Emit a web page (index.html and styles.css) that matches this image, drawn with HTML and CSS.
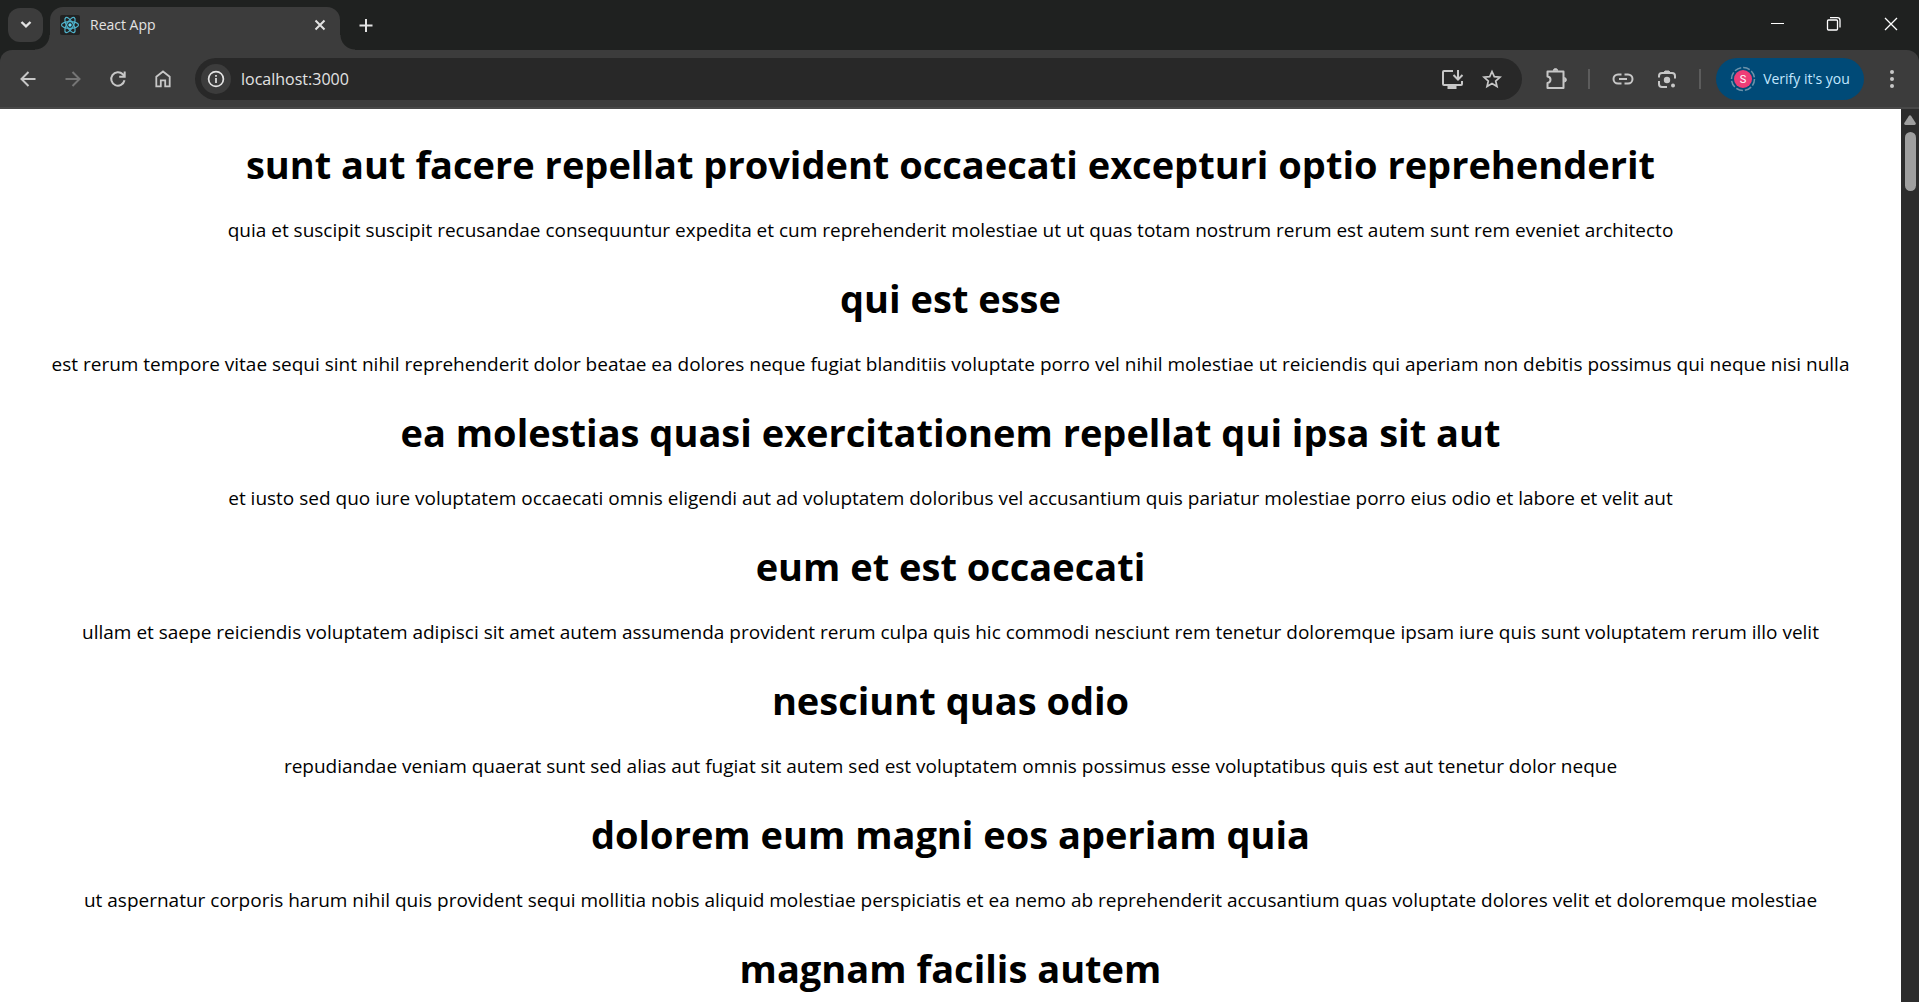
FILE: index.html
```html
<!DOCTYPE html>
<html lang="en">
<head>
<meta charset="utf-8">
<title>React App</title>
<link rel="stylesheet" href="styles.css">
</head>
<body>
<header class="browser">
  <div class="tabstrip">
    <button class="tab-search" aria-label="Search tabs">
      <svg width="20" height="20" viewBox="0 0 20 20" fill="none" stroke="currentColor" stroke-width="2.400"><path d="M5.500 7 10 11.300 14.500 7"/></svg>
    </button>
    <div class="tab">
      <svg class="favicon" width="20" height="20" viewBox="0 0 20 20" fill="none" stroke="#4fb3cc" stroke-width="1.200"><rect width="20" height="20" rx="2" fill="#222" stroke="none"/><ellipse cx="10" cy="10" rx="8.500" ry="3.300"/><ellipse cx="10" cy="10" rx="8.500" ry="3.300" transform="rotate(60 10 10)"/><ellipse cx="10" cy="10" rx="8.500" ry="3.300" transform="rotate(120 10 10)"/><circle cx="10" cy="10" r="1.700" fill="#61dafb" stroke="none"/></svg>
      <span class="tab-title">React App</span>
      <button class="tab-close" aria-label="Close tab">
        <svg width="20" height="20" viewBox="0 0 20 20" fill="none" stroke="currentColor" stroke-width="2"><path d="m5.500 5.500 9 9m0-9-9 9"/></svg>
      </button>
    </div>
    <button class="new-tab" aria-label="New tab">
      <svg width="20" height="20" viewBox="0 0 20 20" fill="none" stroke="currentColor" stroke-width="2"><path d="M10 4v13M3.500 10.500h13"/></svg>
    </button>
    <div class="window-controls">
      <button aria-label="Minimize"><svg width="16" height="16" viewBox="0 0 16 16" stroke="currentColor"><path d="M2 7.500h13"/></svg></button>
      <button aria-label="Restore"><svg width="16" height="16" viewBox="0 0 16 16" fill="none" stroke="currentColor" stroke-width="1.300"><rect x="1.500" y="4" width="10" height="10" rx="1"/><path d="M4 1.700h7.500a2.500 2.500 0 0 1 2.500 2.500V11.500"/></svg></button>
      <button aria-label="Close window"><svg width="16" height="16" viewBox="0 0 16 16" stroke="currentColor" stroke-width="1.300"><path d="m2 2 12 12M14 2 2 14"/></svg></button>
    </div>
  </div>
  <div class="toolbar">
    <nav class="nav-buttons" aria-label="History">
      <button aria-label="Back"><svg width="20" height="20" viewBox="0 0 20 20" fill="none" stroke="currentColor" stroke-width="2"><path d="M17.500 10H3.500M10.500 3 3.500 10l7 7"/></svg></button>
      <button class="off" aria-label="Forward" disabled><svg width="20" height="20" viewBox="0 0 20 20" fill="none" stroke="currentColor" stroke-width="2"><path d="M2.500 10h14M9.500 3l7 7-7 7"/></svg></button>
      <button aria-label="Reload"><svg width="20" height="20" viewBox="0 0 20 20" fill="none" stroke="currentColor" stroke-width="2"><path d="M16.500 11.300A6.700 6.700 0 1 1 14.800 5.300L16 6.500M16.700 2.500v5.200h-5.500"/></svg></button>
      <button aria-label="Home"><svg width="20" height="20" viewBox="0 0 20 20" fill="none" stroke="currentColor" stroke-width="1.800"><path d="M3.300 7.800 10 2.500l6.700 5.300v9.600h-4.500v-6H7.800v6H3.300z"/></svg></button>
    </nav>
    <div class="omnibox">
      <button class="site-info" aria-label="Site information"><svg width="20" height="20" viewBox="0 0 20 20" fill="none" stroke="currentColor" stroke-width="1.700"><circle cx="10" cy="10" r="7.400"/><path d="M10 9v5M10 6v1.800"/></svg></button>
      <input class="url" type="text" value="localhost:3000" aria-label="Address">
      <button aria-label="Install app"><svg width="24" height="24" viewBox="0 0 24 24" fill="none" stroke="currentColor" stroke-width="2"><path d="M13 4H4q-1 0-1 1v12q0 1 1 1h17q1 0 1-1v-3M18 3v9M13.500 8l4.500 4.500L22.500 8"/><path d="M8.500 19v2h7v-2" fill="currentColor"/></svg></button>
      <button aria-label="Bookmark this tab"><svg width="20" height="20" viewBox="0 0 20 20" fill="none" stroke="currentColor" stroke-width="1.700"><path d="m10 2.500 2.300 5.200 5.700.5-4.300 3.800 1.300 5.600-5-3-5 3 1.300-5.600L2 8.200l5.700-.5z"/></svg></button>
    </div>
    <div class="extensions">
      <button aria-label="Extensions"><svg width="24" height="24" viewBox="0 0 24 24" fill="none" stroke="currentColor" stroke-width="2" stroke-linejoin="round"><path d="M3.500 4.500h16v16.500h-16v-5q3-.5 3-3.200t-3-3.200z"/><path d="M9.300 3.800a2.200 2.200 0 0 1 4.400 0M20.200 10.600a2.200 2.200 0 0 1 0 4.400" fill="currentColor" stroke-width="1"/></svg></button>
      <span class="divider"></span>
      <button aria-label="Copy link"><svg width="22" height="22" viewBox="0 0 22 22" fill="none" stroke="currentColor" stroke-width="2"><path d="M9.500 6.500H6a4.500 4.500 0 0 0 0 9h3.500M12.500 6.500H16a4.500 4.500 0 0 1 0 9h-3.500M7 11h8"/></svg></button>
      <button aria-label="Search with Lens"><svg width="20" height="20" viewBox="0 0 20 20" fill="none" stroke="currentColor" stroke-width="2"><path d="M2 8.500V7q0-3 3-3h10q3 0 3 3v2.500M2 12v3q0 3 3 3h5"/><path d="M6.500 4 8 2h4l1.500 2z" fill="currentColor" stroke-width="1"/><circle cx="10" cy="11" r="3.200" fill="currentColor" stroke="none"/><circle cx="16" cy="16.500" r="2" fill="currentColor" stroke="none"/></svg></button>
      <span class="divider"></span>
      <button class="profile">
        <svg width="26" height="26" viewBox="0 0 26 26"><circle cx="13" cy="13" r="11.500" fill="none" stroke="#6d93ab" stroke-width="1.500" stroke-dasharray="7 2"/><circle cx="13" cy="13" r="9" fill="#ee3d77"/><text class="initial" x="13" y="17" text-anchor="middle">S</text></svg>
        <span>Verify it's you</span>
      </button>
      <button aria-label="Menu"><svg width="20" height="20" viewBox="0 0 20 20" fill="currentColor"><circle cx="10" cy="3" r="2"/><circle cx="10" cy="10" r="2"/><circle cx="10" cy="17" r="2"/></svg></button>
    </div>
  </div>
</header>
<div class="viewport">
  <main class="posts">
    <h1>sunt aut facere repellat provident occaecati excepturi optio reprehenderit</h1>
    <p>quia et suscipit suscipit recusandae consequuntur expedita et cum reprehenderit molestiae ut ut quas totam nostrum rerum est autem sunt rem eveniet architecto</p>
    <h1>qui est esse</h1>
    <p>est rerum tempore vitae sequi sint nihil reprehenderit dolor beatae ea dolores neque fugiat blanditiis voluptate porro vel nihil molestiae ut reiciendis qui aperiam non debitis possimus qui neque nisi nulla</p>
    <h1>ea molestias quasi exercitationem repellat qui ipsa sit aut</h1>
    <p>et iusto sed quo iure voluptatem occaecati omnis eligendi aut ad voluptatem doloribus vel accusantium quis pariatur molestiae porro eius odio et labore et velit aut</p>
    <h1>eum et est occaecati</h1>
    <p>ullam et saepe reiciendis voluptatem adipisci sit amet autem assumenda provident rerum culpa quis hic commodi nesciunt rem tenetur doloremque ipsam iure quis sunt voluptatem rerum illo velit</p>
    <h1>nesciunt quas odio</h1>
    <p>repudiandae veniam quaerat sunt sed alias aut fugiat sit autem sed est voluptatem omnis possimus esse voluptatibus quis est aut tenetur dolor neque</p>
    <h1>dolorem eum magni eos aperiam quia</h1>
    <p>ut aspernatur corporis harum nihil quis provident sequi mollitia nobis aliquid molestiae perspiciatis et ea nemo ab reprehenderit accusantium quas voluptate dolores velit et doloremque molestiae</p>
    <h1>magnam facilis autem</h1>
  </main>
  <div class="scrollbar">
    <svg width="12" height="10" viewBox="0 0 12 10" fill="#9f9f9f"><path d="M5 .8q1-1.300 2 0l4.700 7.200q.6 1.700-1.200 2h-9Q-.3 9.700.3 8z"/></svg>
    <div class="thumb"></div>
  </div>
</div>
</body>
</html>
```

FILE: styles.css
```css
* { box-sizing: border-box; }

body {
  margin: 0;
  height: 100vh;
  display: flex;
  flex-direction: column;
  overflow: hidden;
  background: #fff;
  font-family: "Open Sans", "Noto Sans", sans-serif;
}

button {
  display: flex;
  align-items: center;
  justify-content: center;
  flex: none;
  margin: 0;
  padding: 0;
  border: 0;
  background: none;
  color: inherit;
  font: inherit;
}

svg { display: block; flex: none; }

.browser {
  flex: none;
  background: #1f2120;
  color: #e3e3e3;
}

.tabstrip {
  display: flex;
  height: 50px;
  padding-left: 8px;
}

.tab-search {
  width: 35px;
  height: 34px;
  margin-top: 8px;
  border-radius: 12px;
  background: #3c3c3c;
}

.tab {
  position: relative;
  display: flex;
  align-items: center;
  width: 290px;
  height: 43px;
  margin: 7px 0 0 7px;
  padding: 0 10px 7px;
  border-radius: 13px 13px 0 0;
  background: #3c3c3c;
}

.tab::before,
.tab::after {
  content: "";
  position: absolute;
  bottom: 0;
  width: 15px;
  height: 15px;
}

.tab::before {
  right: 100%;
  background: radial-gradient(circle at 0 0, transparent 14px, #3c3c3c 15px);
}

.tab::after {
  left: 100%;
  background: radial-gradient(circle at 100% 0, transparent 14px, #3c3c3c 15px);
}

.tab-title {
  flex: 1;
  margin-left: 10px;
  font-size: 14px;
  line-height: 20px;
}

.new-tab {
  width: 32px;
  height: 34px;
  margin: 8px 0 0 10px;
}

.window-controls {
  display: flex;
  height: 48px;
  margin-left: auto;
}

.window-controls button { width: 57px; color: #fff; }

.toolbar {
  display: flex;
  align-items: center;
  height: 59px;
  padding: 0 5px;
  border-bottom: 2px solid #484848;
  border-radius: 12px 12px 0 0;
  background: #3c3c3c;
  color: #c7c7c7;
}

.nav-buttons { display: flex; }

.nav-buttons button { width: 45px; height: 42px; }

.nav-buttons .off { color: #757575; }

.omnibox {
  display: flex;
  flex: 1;
  align-items: center;
  height: 42px;
  margin-left: 10px;
  padding: 0 10px 0 6px;
  border-radius: 21px;
  background: #282828;
}

.omnibox button { width: 40px; height: 40px; }

.omnibox .site-info {
  width: 30px;
  height: 30px;
  border-radius: 50%;
  background: #3c3c3c;
  color: #e3e3e3;
}

.url {
  flex: 1;
  min-width: 0;
  margin-left: 10px;
  padding: 0;
  border: 0;
  outline: 0;
  background: none;
  color: #e3e3e3;
  font-family: inherit;
  font-size: 16px;
  line-height: 24px;
}

.extensions {
  display: flex;
  align-items: center;
  margin-left: 12px;
}

.extensions button { width: 44px; height: 42px; }

.divider {
  width: 2px;
  height: 20px;
  margin: 0 11px 0 10px;
  background: #5c5c5c;
}

.extensions .profile {
  width: 148px;
  gap: 7px;
  margin: 0 6px 0 4px;
  border-radius: 21px;
  background: #004a77;
  color: #c2e7ff;
  font-size: 14px;
}

.initial {
  fill: #fff;
  font-family: Roboto, sans-serif;
  font-size: 11px;
}

.viewport {
  display: flex;
  flex: 1;
  min-height: 0;
}

.posts {
  flex: 1;
  min-width: 0;
  overflow: hidden;
  color: #000;
  text-align: center;
}

.posts h1 {
  margin: 28px 0 26px;
  font-size: 38px;
  font-weight: 660;
  line-height: 54px;
}

.posts p {
  margin: 0;
  font-size: 19px;
  line-height: 26px;
  white-space: nowrap;
}

.scrollbar {
  display: flex;
  flex: none;
  flex-direction: column;
  align-items: center;
  gap: 7px;
  width: 18px;
  padding-top: 6px;
  background: #2c2c2c;
}

.thumb {
  width: 11px;
  height: 59px;
  border-radius: 6px;
  background: #9f9f9f;
}
```
